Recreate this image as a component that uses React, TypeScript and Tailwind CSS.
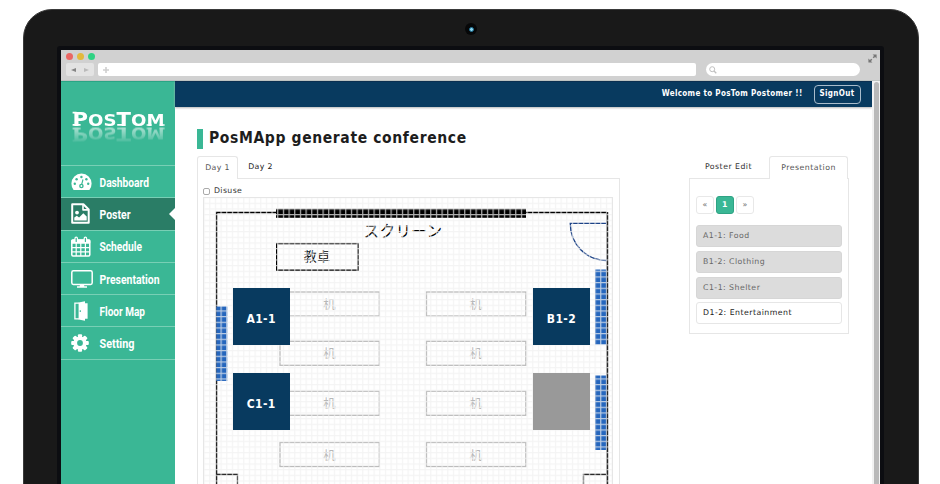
import React from "react";

const SANS = "font-['DejaVu_Sans',sans-serif]";
const COND = "font-['DejaVu_Sans_Condensed','DejaVu_Sans',sans-serif]";

function GaugeIcon() {
  return (
    <svg width="21" height="18" viewBox="0 0 21 18">
      <path d="M2.6 17A10 10 0 0 1 .4 10.6a10.1 10.1 0 0 1 20.2 0 10 10 0 0 1-2.2 6.4z" fill="#fff" />
      <g fill="#3ab795">
        <circle cx="3.8" cy="10.8" r="1.2" />
        <circle cx="5.6" cy="6.3" r="1.2" />
        <circle cx="10.4" cy="4" r="1.2" />
        <circle cx="15.4" cy="6.3" r="1.2" />
        <circle cx="17.2" cy="10.8" r="1.2" />
        <circle cx="10.4" cy="13" r="2.3" />
      </g>
      <path d="M10.4 12.5 12 6.5" stroke="#3ab795" strokeWidth="1.1" />
      <circle cx="10.4" cy="13" r=".9" fill="#fff" />
    </svg>
  );
}

function PosterIcon() {
  return (
    <svg width="19" height="21" viewBox="0 0 19 21" fill="none" stroke="#fff" strokeWidth="2" strokeLinejoin="round">
      <path d="M1.2 1.2h11.2l5.3 5.3v13.3H1.2z" />
      <path d="M12 1.5v5.4h5.4" strokeWidth="1.6" />
      <circle cx="6" cy="9.6" r="1.9" fill="#fff" stroke="none" />
      <path d="M3.3 17.6v-3l2.5-1.8 2.3 1.6 4.2-4.2 3.4 3.2v4.2z" fill="#fff" stroke="none" />
    </svg>
  );
}

function CalendarIcon() {
  return (
    <svg width="20" height="21" viewBox="0 0 20 21" fill="none" stroke="#fff">
      <rect x=".8" y="4" width="18" height="16" rx="1.2" strokeWidth="1.5" />
      <path d="M.8 4h18v3.2H.8z" fill="#fff" />
      <path d="M5.2 7v13M9.8 7v13M14.4 7v13M1 11.6h18M1 15.8h18" strokeWidth="1.2" />
      <path d="M5.2 5.4V2.2M14.4 5.4V2.2" strokeWidth="3.6" strokeLinecap="round" />
      <path d="M5.2 5.4V2.4M14.4 5.4V2.4" stroke="#3ab795" strokeWidth="1.2" strokeLinecap="round" />
    </svg>
  );
}

function MonitorIcon() {
  return (
    <svg width="22" height="18" viewBox="0 0 22 18" fill="none" stroke="#fff">
      <rect x=".8" y=".8" width="20.4" height="13.6" rx="1.6" strokeWidth="1.5" />
      <path d="M8.8 15.6h4.4M6 17.1h10" strokeWidth="1.5" />
    </svg>
  );
}

function DoorIcon() {
  return (
    <svg width="14" height="20" viewBox="0 0 14 20">
      <path d="M5 2.2H.9v15.6H5" fill="none" stroke="#fff" strokeWidth="1.3" />
      <path d="M4.6 1.6 11 .2v2h2.6v15.6H11v2l-6.4-1.4z" fill="#fff" />
      <path d="M6.3 9.3v1.8" stroke="#3ab795" strokeWidth="1.1" />
    </svg>
  );
}

function GearIcon() {
  return (
    <svg width="18" height="18" viewBox="-9 -9 18 18">
      {[0, 45, 90, 135].map((a) => (
        <rect key={a} x="-2.1" y="-8.8" width="4.2" height="17.6" rx="1" fill="#fff" transform={`rotate(${a})`} />
      ))}
      <circle r="6.6" fill="#fff" />
      <circle r="2.9" fill="#3ab795" />
    </svg>
  );
}

const NAV = [
  { label: "Dashboard", icon: <GaugeIcon />, pad: "pl-0", width: 49.5 },
  { label: "Poster", icon: <PosterIcon />, pad: "pl-0", width: 31, active: true },
  { label: "Schedule", icon: <CalendarIcon />, pad: "pl-0", width: 42.5 },
  { label: "Presentation", icon: <MonitorIcon />, pad: "pl-0", width: 60 },
  { label: "Floor Map", icon: <DoorIcon />, pad: "pl-[3px]", width: 45.5 },
  { label: "Setting", icon: <GearIcon />, pad: "pl-0", width: 35 },
];

function Logo() {
  return (
    <div className="h-[83.5px] pt-[24px]">
      <div className="h-[25px] [-webkit-box-reflect:below_-8.5px_linear-gradient(to_top,rgba(255,255,255,0.75),rgba(255,255,255,0.02)_85%)]">
        <svg width="114" height="25" className="block font-['DejaVu_Sans',sans-serif] font-bold">
          <text x="11.5" y="19.7" fontSize="19" fill="#fff" textLength="92" lengthAdjust="spacingAndGlyphs">
            P<tspan fontSize="16.3">OS</tspan>T<tspan fontSize="16.3">OM</tspan>
          </text>
          <path d="M11.6 5.8h4v1.8h-4zM11.6 17.9h8v1.8h-8zM56.2 17.9h7v1.8h-7zM85.6 18.2h5v1.5h-5zM98.6 18.2h5v1.5h-5z" fill="#fff" />
        </svg>
      </div>
    </div>
  );
}

function Sidebar() {
  return (
    <aside className="w-[114px] shrink-0 border-t border-[#2aa585] bg-[#3ab795]">
      <Logo />
      <nav className="h-[195px] border-b border-[#78cfb5]">
        {NAV.map((n) => (
          <div
            key={n.label}
            className={`relative flex h-[32.3px] items-center border-t border-[#78cfb5] pl-[10px] ${n.active ? "bg-[#2a7d66]" : ""}`}
          >
            <span className={`w-[28px] shrink-0 ${n.pad}`}>{n.icon}</span>
            <svg width="74" height="20" className="shrink-0 overflow-visible font-['Roboto',sans-serif] font-bold">
              <text x=".5" y="14.6" fontSize="13" fill="#fff" textLength={n.width} lengthAdjust="spacingAndGlyphs">
                {n.label}
              </text>
            </svg>
            {n.active && (
              <i className="absolute right-0 top-[10px] border-y-[6px] border-r-[6px] border-y-transparent border-r-white" />
            )}
          </div>
        ))}
      </nav>
    </aside>
  );
}

function BrowserChrome() {
  return (
    <div className="flex h-[30.5px] shrink-0 flex-col border-b border-[#bfc4c2] bg-[#d1d1d1]">
      <div className="flex h-[13px] items-center gap-[4.3px] pl-[4.5px]">
        <i className="size-[7px] rounded-full bg-[#ea6663]" />
        <i className="size-[7px] rounded-full bg-[#e3b93c]" />
        <i className="size-[7px] rounded-full bg-[#2fd283]" />
        <svg width="9" height="9" viewBox="0 0 9 9" className="ml-auto mr-[3px] mt-[3px]" fill="#777" stroke="#777">
          <path d="M4.6.4h4v4zM.4 4.6v4h4z" stroke="none" />
          <path d="M7.3 1.7 5.2 3.8M3.8 5.2 1.7 7.3" strokeWidth="1.5" />
        </svg>
      </div>
      <div className="flex h-[13px] pl-[4.5px]">
        <div className="flex w-[28px] items-center justify-between rounded-[2px] bg-[#e3e3e3] px-[5px]">
          <i className="border-y-[2.5px] border-r-[5px] border-y-transparent border-r-[#858585]" />
          <i className="border-y-[2.5px] border-l-[5px] border-y-transparent border-l-[#bababa]" />
        </div>
        <div className="ml-[4.5px] flex w-[598px] items-center rounded-[2px] bg-white pl-[5px]">
          <svg width="6" height="6" viewBox="0 0 6 6"><path d="M3 0v6M0 3h6" stroke="#cfcfcf" strokeWidth="1.6" /></svg>
        </div>
        <div className="ml-[10px] flex w-[154px] items-center rounded-full bg-white pl-[3px]">
          <svg width="8" height="8" viewBox="0 0 8 8" fill="none" stroke="#c0c0c0">
            <circle cx="3.2" cy="3.2" r="2.5" /><path d="m5 5 2.3 2.3" strokeWidth="1.3" />
          </svg>
        </div>
      </div>
    </div>
  );
}

const DESK_Y = [292, 341.3, 391.3, 442.5];
const DESK_X = [280, 426.5];

function FloorMap() {
  return (
    <svg width="408" height="286" viewBox="204 198 408 286" className="block">
      <defs>
        <pattern id="grid" width="5.667" height="5.667" patternUnits="userSpaceOnUse" x="203.5" y="208.4">
          <path d="M0 .6h5.667M.6 0v5.667" stroke="#f0f0f0" strokeOpacity=".75" strokeWidth="1.2" />
        </pattern>
      </defs>
      <g fill="none" stroke="#000">
        <path d="M216.5 484V212.5H607" strokeWidth="1.5" />
        <path d="M607.2 212V484" strokeWidth="2" />
        <rect x="276.7" y="243.6" width="81.3" height="26.6" strokeWidth="1.4" />
        <path d="M216.5 474.5H237.5V484M606 474.5H583.5V484" strokeWidth="1.3" />
      </g>
      <rect x="276" y="208.8" width="250" height="9" fill="#000" />
      <g fill="#2566bd">
        <rect x="216.3" y="306.5" width="11" height="74.5" />
        <rect x="595" y="269.5" width="11.5" height="75" />
        <rect x="595" y="375.5" width="11.5" height="74.5" />
      </g>
      <path d="M607 223.4H570.3C570.3 244 586 260.5 607 260.5" fill="none" stroke="#1c4286" strokeWidth="1.4" />
      <g fill="none" stroke="#bcbcbc" strokeWidth="1.3">
        {DESK_Y.map((y) => DESK_X.map((x) => <rect key={`${x}-${y}`} x={x} y={y} width="99.3" height="24" />))}
      </g>
      <g className="font-['Noto_Sans_CJK_JP',sans-serif]" textAnchor="middle">
        <text x="403" y="236.6" fontSize="16" fill="#000" textLength="79" lengthAdjust="spacingAndGlyphs">スクリーン</text>
        <text x="317" y="261.4" fontSize="13" fill="#000">教卓</text>
        <g fontSize="12.5" fill="#b8b8b8">
          {DESK_Y.map((y) => DESK_X.map((x) => <text key={`${x}-${y}`} x={x + 49.5} y={y + 17}>机</text>))}
        </g>
      </g>
      <rect x="204" y="198" width="408" height="286" fill="url(#grid)" />
    </svg>
  );
}

const POSTERS = [
  { label: "A1-1", box: "left-[28.7px] top-[90.3px] bg-[#083a5f]" },
  { label: "B1-2", box: "left-[329px] top-[90.3px] bg-[#083a5f]" },
  { label: "C1-1", box: "left-[28.7px] top-[175.3px] bg-[#083a5f]" },
  { label: "", box: "left-[329px] top-[175.3px] bg-[#999]" },
];

function MapPanel() {
  return (
    <section className="w-[423px] text-[7.8px] tracking-[0.37px] text-[#444]">
      <div className="flex h-[22px]">
        <div className="relative z-10 -mb-px flex w-[41px] items-center justify-center rounded-t-[3px] border border-b-0 border-[#e6e6e6] bg-white text-[#555]">Day 1</div>
        <div className="flex w-[45px] items-center justify-center text-[#222]">Day 2</div>
      </div>
      <div className="h-[306px] border border-b-0 border-[#e6e6e6] px-[5px] pt-[7px]">
        <label className="flex h-[10px] items-center gap-[4px] text-[#333]">
          <i className="size-[7px] rounded-[2px] border border-[#aaa]" />
          Disuse
        </label>
        <div className="relative mt-px w-[410px] border border-b-0 border-[#e6e6e6]">
          <FloorMap />
          {POSTERS.map((p, i) => (
            <div key={i} className={`absolute flex size-[57px] items-center justify-center pt-[5px] text-[12px] font-bold tracking-[0.4px] text-white ${COND} ${p.box}`}>
              {p.label}
            </div>
          ))}
        </div>
      </div>
    </section>
  );
}

function PresentationPanel() {
  return (
    <section className="w-[160px] text-[7.8px] tracking-[0.47px]">
      <div className="flex h-[22px]">
        <div className="flex w-[79px] items-center justify-center text-[#333]">Poster Edit</div>
        <div className="relative z-10 -mb-px ml-px flex w-[79px] items-center justify-center rounded-t-[3px] border border-b-0 border-[#e6e6e6] bg-white text-[#555]">Presentation</div>
      </div>
      <div className="h-[156px] border border-[#e6e6e6] px-[6px] pt-[17px]">
        <div className="flex gap-[2px] text-center leading-[16px] text-[#777]">
          <span className="size-[18px] rounded-[3px] border border-[#e8e8e8]">«</span>
          <span className="size-[18px] rounded-[3px] border border-[#2fa384] bg-[#3ab795] font-bold text-white">1</span>
          <span className="size-[18px] rounded-[3px] border border-[#e8e8e8]">»</span>
        </div>
        <ul className="mt-[11.4px] flex flex-col gap-[3.7px] leading-[20px] text-[#686868]">
          {["A1-1: Food", "B1-2: Clothing", "C1-1: Shelter"].map((t) => (
            <li key={t} className="h-[22px] rounded-[3px] border border-[#d6d6d6] bg-[#dcdcdc] px-[6px]">{t}</li>
          ))}
          <li className="h-[22px] rounded-[3px] border border-[#e6e6e6] bg-white px-[6px] text-[#222]">D1-2: Entertainment</li>
        </ul>
      </div>
    </section>
  );
}

export default function App() {
  return (
    <div className={`h-[484px] w-[940px] overflow-hidden bg-white pl-[23px] pt-[9px] ${SANS}`}>
      <div className="flex h-[520px] w-[896px] flex-col rounded-[29px] border border-[#3a3a3a] bg-[#191919] pl-[33px]">
        <div className="flex h-[36px] shrink-0 justify-center pr-[33px] pt-[13px]">
          <i className="flex size-[12px] items-center justify-center rounded-full bg-[#060708]">
            <i className="size-[5px] rounded-full border border-[#1d7196] bg-[#8fd8f0]" />
          </i>
        </div>
        <div className="w-[827px] grow rounded-t-[3px] bg-[#0c0d11] px-[4px] pt-[4px]">
          <div className="flex h-full flex-col bg-white">
            <BrowserChrome />
            <div className="flex grow">
              <Sidebar />
              <div className="w-[697px]">
                <header className={`flex h-[26.5px] items-center justify-end border-t border-[#0b2f50] bg-[#083a5f] pr-[11.5px] text-[8px] font-bold tracking-[0.33px] text-white shadow-[0_1px_2px_#b5b5b5] ${COND}`}>
                  <span>Welcome to PosTom Postomer !!</span>
                  <span className="ml-[11px] h-[19px] w-[47px] rounded-[4px] border border-[#a9bccb] text-center leading-[16px]">SignOut</span>
                </header>
                <main className="pl-[22px] pt-[22px]">
                  <h1 className={`flex h-[20px] items-center border-l-[6px] border-[#3ab795] pl-[6px] text-[15.5px] font-bold tracking-[0.62px] text-[#1d1d1d] ${COND}`}>
                    PosMApp generate conference
                  </h1>
                  <div className="mt-[7px] flex gap-[69px]">
                    <MapPanel />
                    <PresentationPanel />
                  </div>
                </main>
              </div>
              <div className="w-[8px] bg-[#f2f2f2] pl-[2px] pt-[1px]">
                <div className="h-full w-[5px] rounded-t-[3px] bg-[#b9b9b9]" />
              </div>
            </div>
          </div>
        </div>
      </div>
    </div>
  );
}
